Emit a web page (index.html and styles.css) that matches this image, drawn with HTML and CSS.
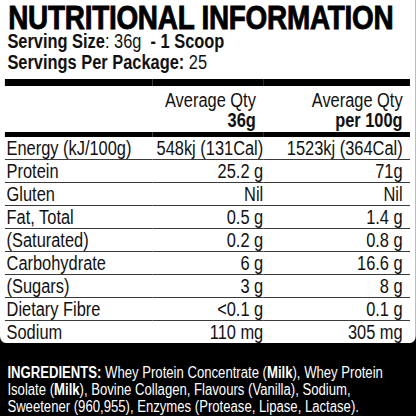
FILE: index.html
```html
<!DOCTYPE html>
<html lang="en">
<head>
    <meta charset="UTF-8">
    <meta name="viewport" content="width=device-width, initial-scale=1.0">
    <title>Nutritional Information</title>
    <link rel="stylesheet" href="styles.css">
</head>
<body>
    <!-- No narrow font installed, so the sheet is squeezed horizontally -->
    <div class="sheet">
        <div class="panel">
            <h1>NUTRITIONAL INFORMATION</h1>
            <p class="serving"><b>Serving Size</b>: 36g &nbsp;<b>- 1 Scoop</b></p>
            <p class="serving"><b>Servings Per Package:</b> 25</p>

            <table class="facts">
                <colgroup>
                    <col class="col-name">
                    <col class="col-serve">
                    <col class="col-100">
                </colgroup>
                <thead>
                    <tr>
                        <th></th>
                        <th>Average Qty<br><b>36g</b></th>
                        <th>Average Qty<br><b>per 100g</b></th>
                    </tr>
                </thead>
                <tbody>
                    <tr><td>Energy (kJ/100g)</td><td>548kj (131Cal)</td><td>1523kj (364Cal)</td></tr>
                    <tr><td>Protein</td><td>25.2 g</td><td>71g</td></tr>
                    <tr><td>Gluten</td><td>Nil</td><td>Nil</td></tr>
                    <tr><td>Fat, Total</td><td>0.5 g</td><td>1.4 g</td></tr>
                    <tr><td>(Saturated)</td><td>0.2 g</td><td>0.8 g</td></tr>
                    <tr><td>Carbohydrate</td><td>6 g</td><td>16.6 g</td></tr>
                    <tr><td>(Sugars)</td><td>3 g</td><td>8 g</td></tr>
                    <tr><td>Dietary Fibre</td><td>&lt;0.1 g</td><td>0.1 g</td></tr>
                    <tr><td>Sodium</td><td>110 mg</td><td>305 mg</td></tr>
                </tbody>
            </table>
        </div>

        <div class="ingredients">
            <p><b>INGREDIENTS:</b> Whey Protein Concentrate (<b>Milk</b>), Whey Protein Isolate (<b>Milk</b>), Bovine Collagen, Flavours (Vanilla), Sodium, Sweetener (960,955), Enzymes (Protease, Lipase, Lactase).</p>
        </div>
    </div>
</body>
</html>
```

FILE: styles.css
```css
body {
    margin: 0;
    overflow: hidden;
    background-color: #000;
    font-family: "Liberation Sans", Arial, sans-serif;
    color: #111;
}

.sheet {
    width: 507px;
    transform: scaleX(0.82);
    transform-origin: 0 0;
}

.panel {
    background-color: #fff;
    border-radius: 0 0 7px 7px;
    padding: 0 7px 0 6px;
}

.panel h1 {
    margin: 0;
    padding: 4px 0 0 4px;
    font-weight: 700;
    font-size: 34px;
    line-height: 27px;
    letter-spacing: -0.3px;
    color: #000;
    -webkit-text-stroke: 0.9px #000;
}

.serving {
    margin: 0;
    padding-left: 3px;
    font-size: 20px;
    line-height: 21px;
}

.facts {
    width: 494px;
    margin-top: 6px;
    border-collapse: collapse;
    border-top: 7px solid #000;
    font-size: 20px;
}

.col-name {
    width: 180px;
}

.col-serve {
    width: 135px;
}

.facts th {
    padding: 4px 9px 2px 0;
    text-align: right;
    font-weight: normal;
    line-height: 20px;
    border-bottom: 5px solid #000;
}

.facts td {
    height: 22px;
    padding: 0;
    line-height: 22px;
    text-align: right;
    border-bottom: 1px solid #3a3a3a;
    white-space: nowrap;
}

.facts td:first-child {
    padding-left: 2px;
    text-align: left;
}

.facts td:last-child {
    padding-right: 9px;
}

.facts tbody tr:last-child td {
    border-bottom: none;
}

.ingredients {
    padding: 21px 20px 0 9px;
    color: #fff;
}

.ingredients p {
    margin: 0;
    font-size: 16px;
    line-height: 17px;
}
```
